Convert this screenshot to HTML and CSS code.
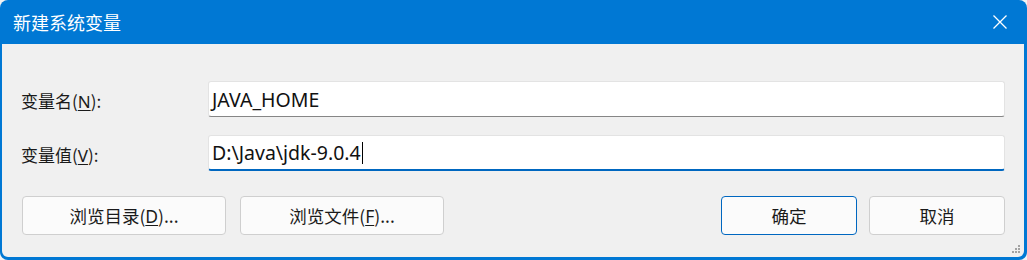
FILE: index.html
```html
<!DOCTYPE html>
<html lang="zh-CN">
<head>
  <meta charset="UTF-8">
  <title>新建系统变量</title>
  <link rel="stylesheet" href="styles.css">
</head>
<body>
  <div class="window">
    <div class="titlebar">
      <span class="title">新建系统变量</span>
      <svg class="close" width="14" height="14" viewBox="0 0 14 14">
        <path d="M0.5 0.5 L13.5 13.5 M13.5 0.5 L0.5 13.5" stroke="#fff" stroke-width="1.3" fill="none"/>
      </svg>
    </div>
    <div class="content">
      <div class="form">
        <label class="label">变量名(<u>N</u>):</label>
        <div class="field">JAVA_HOME</div>
        <label class="label">变量值(<u>V</u>):</label>
        <div class="field focused">D:\Java\jdk-9.0.4<span class="caret"></span></div>
      </div>
      <div class="buttons">
        <button class="btn wide">浏览目录(<u>D</u>)...</button>
        <button class="btn wide">浏览文件(<u>F</u>)...</button>
        <div class="spacer"></div>
        <button class="btn primary">确定</button>
        <button class="btn">取消</button>
      </div>
      <!-- size grip -->
      <svg class="grip" width="9" height="9" viewBox="0 0 9 9">
        <rect x="6" y="0" width="2" height="2" fill="#a3a3a3"/>
        <rect x="3" y="3" width="2" height="2" fill="#a3a3a3"/>
        <rect x="6" y="3" width="2" height="2" fill="#a3a3a3"/>
        <rect x="0" y="6" width="2" height="2" fill="#a3a3a3"/>
        <rect x="3" y="6" width="2" height="2" fill="#a3a3a3"/>
        <rect x="6" y="6" width="2" height="2" fill="#a3a3a3"/>
      </svg>
    </div>
  </div>
</body>
</html>
```

FILE: styles.css
```css
body {
  margin: 0;
  padding: 0;
  background: #f3f3f3;
  font-family: "Noto Sans", "Noto Sans CJK SC", sans-serif;
  color: #1a1a1a;
}
.window {
  width: 1027px;
  height: 260px;
  box-sizing: border-box;
  padding: 0 3px 3px 2px;
  background: #0078d4;
  border-radius: 8px;
  overflow: hidden;
  display: flex;
  flex-direction: column;
}
.titlebar {
  height: 44px;
  flex: none;
  display: flex;
  align-items: center;
  justify-content: space-between;
  padding: 0 17px 0 11px;
  color: #fff;
}
.title {
  font-family: "Noto Sans CJK SC", sans-serif;
  font-size: 18px;
  line-height: 1;
  margin-top: -1px;
}
.close {
  display: block;
}
.content {
  flex: 1;
  position: relative;
  background: #f0f0f0;
  border-radius: 0 0 6px 6px;
  padding: 37px 19px 0 20px;
}
.form {
  display: grid;
  grid-template-columns: 186px 1fr;
  grid-auto-rows: 36px;
  row-gap: 18px;
  align-items: center;
}
.label {
  font-family: "Noto Sans CJK SC", sans-serif;
  font-size: 17px;
  padding-top: 2px;
  margin-left: -1px;
}
.label u {
  font-family: "Noto Sans", sans-serif;
  text-underline-offset: 2px;
}
.field {
  height: 36px;
  box-sizing: border-box;
  background: #fff;
  border: 1px solid #e3e3e3;
  border-bottom: 1px solid #868686;
  border-radius: 3px;
  padding: 0 3px;
  display: flex;
  align-items: center;
  font-size: 19.5px;
  color: #111;
}
.field.focused {
  border-bottom: 2px solid #0067c0;
}
.caret {
  display: inline-block;
  width: 1px;
  height: 22px;
  background: #000;
  margin-left: 1px;
}
.buttons {
  display: flex;
  gap: 14px;
  margin-top: 25px;
}
.btn {
  height: 39px;
  width: 136px;
  box-sizing: border-box;
  background: #fbfbfb;
  border: 1px solid #cfcfcf;
  border-radius: 4px;
  font-family: "Noto Sans CJK SC", sans-serif;
  font-size: 17.5px;
  color: #1a1a1a;
  padding: 0;
}
.btn u {
  font-family: "Noto Sans", sans-serif;
  text-underline-offset: 2px;
}
.btn.wide {
  width: 204px;
}
.btn.primary {
  border-color: #0067c0;
}
.buttons .btn.primary + .btn {
  margin-left: -2px;
}
.spacer {
  flex: 1;
}
.grip {
  position: absolute;
  right: 3px;
  bottom: 3px;
}
```
